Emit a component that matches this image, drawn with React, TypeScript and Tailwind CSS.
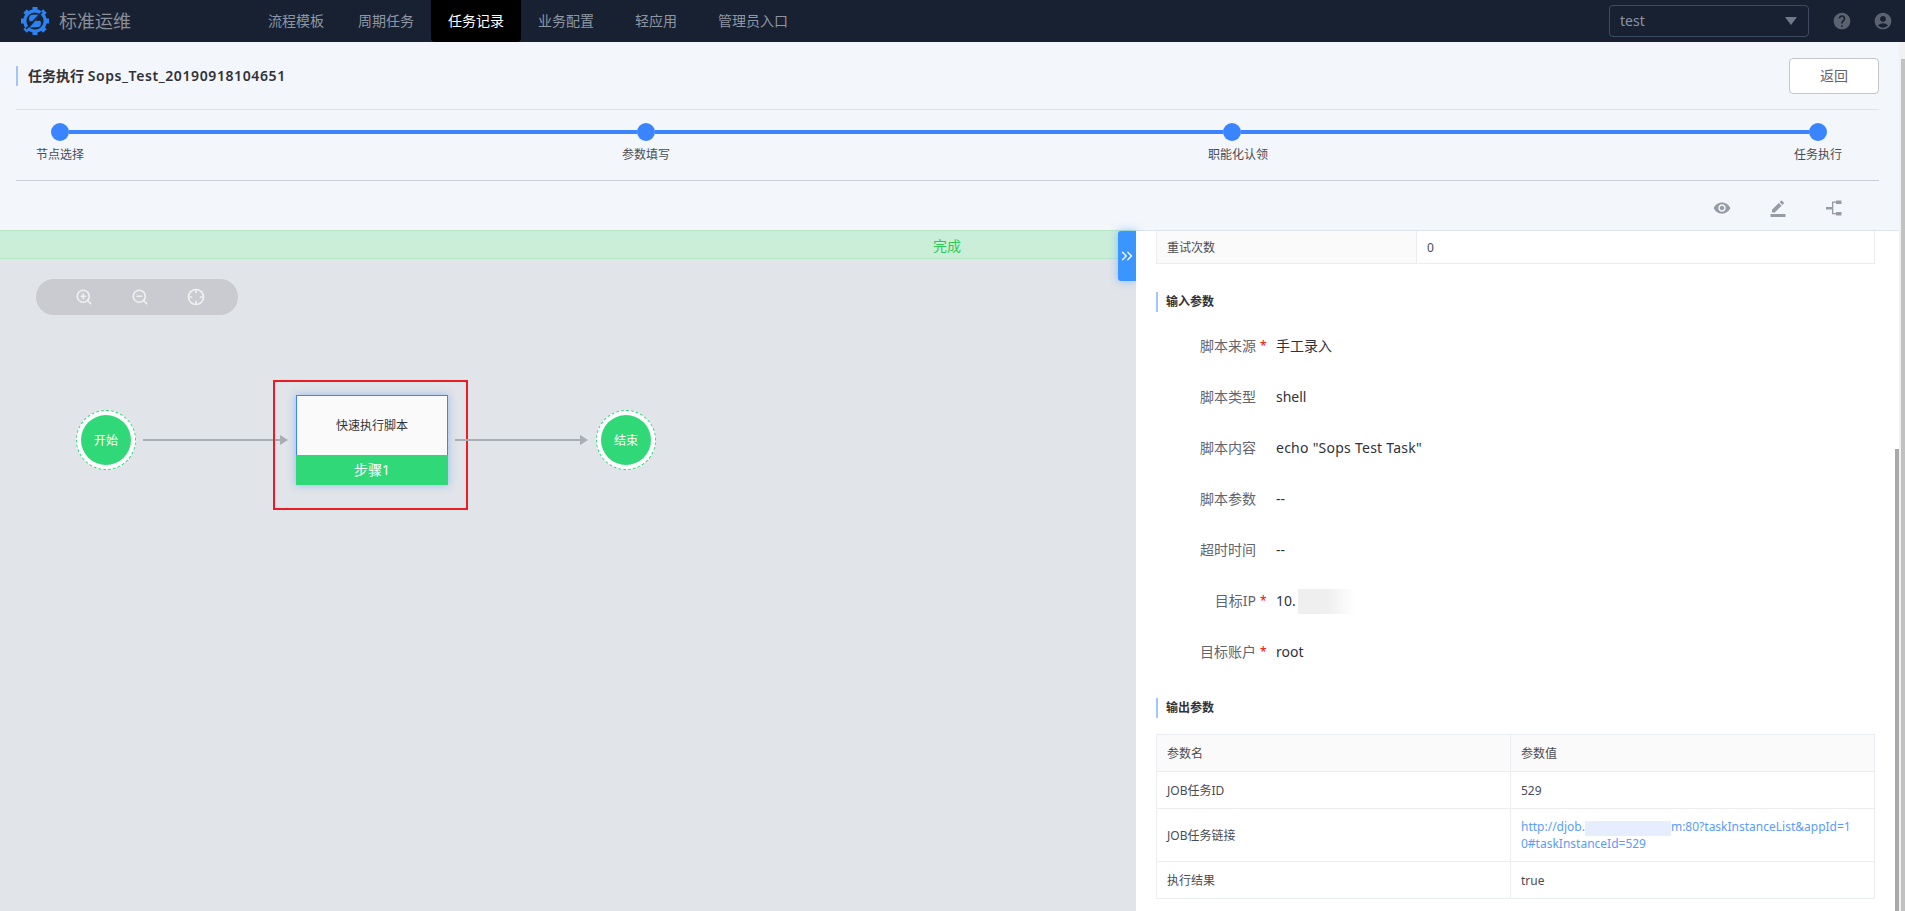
import React from "react";
import { ZoomIn, ZoomOut, Crosshair, ChevronsRight } from "lucide-react";
import { MdHelp, MdAccountCircle, MdVisibility, MdBorderColor } from "react-icons/md";

const font = { fontFamily: '"Noto Sans","Noto Sans CJK SC",sans-serif' };

function Logo() {
  const teeth = [0, 45, 90, 135, 180, 225, 270, 315];
  return (
    <svg width="28" height="28" viewBox="0 0 28 28">
      {teeth.map((a) => (
        <rect key={a} x="11.5" y="0" width="5" height="5" fill="#2c82ee" transform={`rotate(${a} 14 14)`} />
      ))}
      <circle cx="14" cy="14" r="10.2" fill="none" stroke="#2c82ee" strokeWidth="3.2" />
      <path d="M19.5 7.5 L11 7.8 Q7.8 8.5 8 12 L8.6 14.2 L14 14 L8.5 20.5 L17 20.2 Q20.2 19.5 20 16 L19.4 13.8 L14 14 Z" fill="#2c82ee" />
      <path d="M21 5 L5 22" stroke="#182132" strokeWidth="1.6" />
    </svg>
  );
}

function Nav() {
  const items = ["流程模板", "周期任务", "任务记录", "业务配置", "轻应用", "管理员入口"];
  return (
    <header className="flex h-[42px] items-stretch bg-[#182132]">
      <div className="flex w-[251px] items-center pl-[21px]">
        <Logo />
        <span className="ml-[10px] text-[18px] text-[#8a8f99]">标准运维</span>
      </div>
      <nav className="flex">
        {items.map((t) => (
          <a
            key={t}
            className={
              t === "任务记录"
                ? "flex min-w-[90px] items-center justify-center rounded-b-sm bg-black px-[17px] text-sm text-white"
                : "flex min-w-[90px] items-center justify-center px-[17px] text-sm text-[#8f96a3]"
            }
          >
            {t}
          </a>
        ))}
      </nav>
      <div className="ml-auto flex items-center pr-3">
        <div className="mb-[1px] flex h-[32px] w-[200px] items-center justify-between rounded-sm border border-[#3d4a60] pl-[10px] pr-[11px]">
          <span className="text-sm text-[#8a94a6]">test</span>
          <span className="h-0 w-0 border-x-[6px] border-t-[8px] border-x-transparent border-t-[#70798a]" />
        </div>
        <MdHelp className="ml-[23px] text-[#5c6370]" size={20} />
        <MdAccountCircle className="ml-[21px] text-[#5c6370]" size={20} />
      </div>
    </header>
  );
}

function Stepper() {
  const labels = ["节点选择", "参数填写", "职能化认领", "任务执行"];
  const dot = "h-[18px] w-[18px] shrink-0 rounded-full bg-[#3a84ff]";
  const bar = "h-[4px] flex-1 bg-[#3a84ff]";
  return (
    <div className="h-[71px] border-b border-[#cacedb] pt-[13px]">
      <div className="mx-[35px] mr-[52px] flex items-center">
        <span className={dot} />
        <span className={bar} />
        <span className={dot} />
        <span className={bar} />
        <span className={dot} />
        <span className={bar} />
        <span className={dot} />
      </div>
      <div className="ml-[20px] mr-[37px] mt-[5px] flex justify-between text-xs leading-[18px] text-[#4a4c55]">
        {labels.map((l, i) => (
          <span key={l} className={i === 2 ? "-mr-[12px]" : ""}>
            {l}
          </span>
        ))}
      </div>
    </div>
  );
}

function SubHeader() {
  return (
    <section className="h-[189px] border-b border-[#dde4eb] bg-[#f3f6fa] pl-4 pr-5 pt-4">
      <div className="flex h-[52px] items-start justify-between border-b border-[#dde4eb]">
        <h1 className="mt-2 border-l-2 border-[#a3c5fd] pl-[10px] text-sm font-semibold leading-5 text-[#313238]">
          任务执行 <span className="tracking-[0.6px]">Sops_Test_20190918104651</span>
        </h1>
        <button className="h-9 w-[90px] rounded-sm border border-[#c4c6cc] bg-white text-sm text-[#63656e]">返回</button>
      </div>
      <Stepper />
      <div className="flex h-[48px] items-center justify-end gap-[36px] pr-[35px] pt-[6px] text-[#979ba5]">
        <span className="flex w-5 justify-center">
          <MdVisibility size={18} />
        </span>
        <span className="flex w-5 justify-center">
          <MdBorderColor size={18} />
        </span>
        <svg width="20" height="20" viewBox="0 0 20 20" fill="#979ba5">
          <rect x="2" y="9" width="6" height="2.5" />
          <rect x="8" y="4" width="1.3" height="12" />
          <rect x="8" y="3.5" width="9" height="1.3" />
          <rect x="8" y="15" width="9" height="1.3" />
          <rect x="12" y="2.5" width="5.5" height="3.5" rx="0.5" />
          <rect x="12" y="14" width="5.5" height="3.5" rx="0.5" />
        </svg>
      </div>
    </section>
  );
}

function Arrow({ width, className }: { width: number; className: string }) {
  return (
    <svg className={className} width={width} height="12" viewBox={`0 0 ${width} 12`}>
      <rect x="0" y="5" width={width - 6} height="2" fill="#a9adb6" />
      <path d={`M${width - 8} 1 L${width} 6 L${width - 8} 11 Z`} fill="#a9adb6" />
    </svg>
  );
}

function EventNode({ label, className }: { label: string; className: string }) {
  return (
    <div className={`absolute top-[151px] flex h-[60px] w-[60px] items-center justify-center rounded-full border border-dashed border-[#2dd878] bg-white ${className}`}>
      <div className="flex h-[50px] w-[50px] items-center justify-center rounded-full bg-[#30d878] pt-px text-xs text-white">{label}</div>
    </div>
  );
}

function Canvas() {
  return (
    <div className="flex w-[1136px] shrink-0 flex-col">
      <div className="relative -mt-px h-[29px] shrink-0 border-y border-[#b7e6c8] bg-[#cbeed9] pl-[933px] text-sm leading-[29px] text-[#2dcb56]">完成</div>
      <div className="relative flex-1 bg-[#e1e4e8]">
        <div className="absolute left-9 top-5 flex h-9 w-[202px] items-center rounded-full bg-[#cacbd0] pl-[39px] text-[#f0f0f0]">
          <ZoomIn size={18} strokeWidth={2.2} />
          <ZoomOut className="ml-[38px]" size={18} strokeWidth={2.2} />
          <Crosshair className="ml-[38px]" size={18} strokeWidth={2.2} />
        </div>
        <EventNode label="开始" className="left-[76px]" />
        <Arrow width={145} className="absolute left-[143px] top-[175px]" />
        <div className="absolute left-[273px] top-[121px] h-[130px] w-[195px] border-2 border-[#ed1c24]" />
        <div className="absolute left-[296px] top-[136px] h-[90px] w-[152px] shadow-[0_0_8px_rgba(58,132,255,0.45)]">
          <div className="flex h-[60px] items-center justify-center border border-b-0 border-[#3a84ff] bg-[#fafafa] text-xs text-[#313238]">快速执行脚本</div>
          <div className="flex h-[30px] items-center justify-center bg-[#30d878] text-sm text-white">步骤1</div>
        </div>
        <Arrow width={133} className="absolute left-[455px] top-[175px]" />
        <EventNode label="结束" className="left-[596px]" />
      </div>
      <button className="absolute left-[1118px] top-[231px] flex h-[50px] w-[18px] items-center justify-center rounded-l-[3px] bg-[#3a95ff] text-white shadow-[0_0_8px_rgba(58,149,255,0.5)]">
        <ChevronsRight size={20} strokeWidth={1.6} />
      </button>
    </div>
  );
}

function SectionTitle({ children }: { children: React.ReactNode }) {
  return <h2 className="h-5 border-l-2 border-[#a3c5fd] pl-2 text-xs font-semibold leading-5 text-[#313238]">{children}</h2>;
}

function Field({ label, required, children }: { label: string; required?: boolean; children: React.ReactNode }) {
  return (
    <div className="flex h-[51px] items-center text-sm text-[#313238]">
      <span className="w-[100px] text-right text-[#63656e]">{label}</span>
      <span className="w-[20px] pl-[4px] text-xs text-[#ff0000]">{required ? "*" : ""}</span>
      <span className="flex items-center">{children}</span>
    </div>
  );
}

function Panel() {
  const cell = "border border-[#ebedf2] px-[10px] pt-[2px] pb-0 text-left font-normal";
  return (
    <aside className="relative flex-1 overflow-hidden bg-white pl-5 pr-6">
      <table className="w-full table-fixed border-collapse text-xs text-[#4a4c55]">
        <tbody>
          <tr className="h-[32px]">
            <td className={`w-[260px] bg-[#fafafa] border-t-0 ${cell} pt-0`}>重试次数</td>
            <td className={`border-t-0 ${cell} pt-0`}>0</td>
          </tr>
        </tbody>
      </table>
      <div className="mt-7">
        <SectionTitle>输入参数</SectionTitle>
      </div>
      <div className="mt-[9px]">
        <Field label="脚本来源" required>手工录入</Field>
        <Field label="脚本类型">shell</Field>
        <Field label="脚本内容">
          <span className="tracking-[0.25px]">echo "Sops Test Task"</span>
        </Field>
        <Field label="脚本参数">--</Field>
        <Field label="超时时间">--</Field>
        <Field label="目标IP" required>
          10.
          <span className="ml-[2px] h-[25px] w-[57px] bg-linear-to-r from-[#efefef] via-[#efefef] to-white" />
        </Field>
        <Field label="目标账户" required>root</Field>
      </div>
      <div className="mt-5">
        <SectionTitle>输出参数</SectionTitle>
      </div>
      <table className="mt-4 w-[719px] table-fixed border-collapse text-xs text-[#4a4c55]">
        <thead>
          <tr className="h-[37px] bg-[#fafafa]">
            <th className={`w-[354px] ${cell}`}>参数名</th>
            <th className={cell}>参数值</th>
          </tr>
        </thead>
        <tbody>
          <tr className="h-[37px]">
            <td className={cell}>JOB任务ID</td>
            <td className={cell}>529</td>
          </tr>
          <tr className="h-[53px]">
            <td className={cell}>JOB任务链接</td>
            <td className={`${cell} leading-4 text-[#5b9bff]`}>
              <a>
                http://djob.
                <span className="inline-block h-[15px] w-[86px] bg-[#e6eefd] align-middle" />
                m:80?taskInstanceList&amp;appId=1
                <br />
                0#taskInstanceId=529
              </a>
            </td>
          </tr>
          <tr className="h-[37px]">
            <td className={cell}>执行结果</td>
            <td className={cell}>true</td>
          </tr>
        </tbody>
      </table>
      <div className="absolute bottom-0 right-0 top-[218px] w-[4px] bg-[#a9a9a9]" />
    </aside>
  );
}

export default function App() {
  return (
    <div className="relative flex h-[911px] w-[1905px] flex-col overflow-hidden bg-white" style={font}>
      <Nav />
      <div className="flex min-h-0 flex-1">
        <main className="flex min-w-0 flex-1 flex-col">
          <SubHeader />
          <div className="flex min-h-0 flex-1">
            <Canvas />
            <Panel />
          </div>
        </main>
        <div className="w-[6px] shrink-0 bg-[#f1f1f1] pl-[2px] pt-[17px]">
          <div className="h-full w-full bg-[#c1c1c1]" />
        </div>
      </div>
    </div>
  );
}
